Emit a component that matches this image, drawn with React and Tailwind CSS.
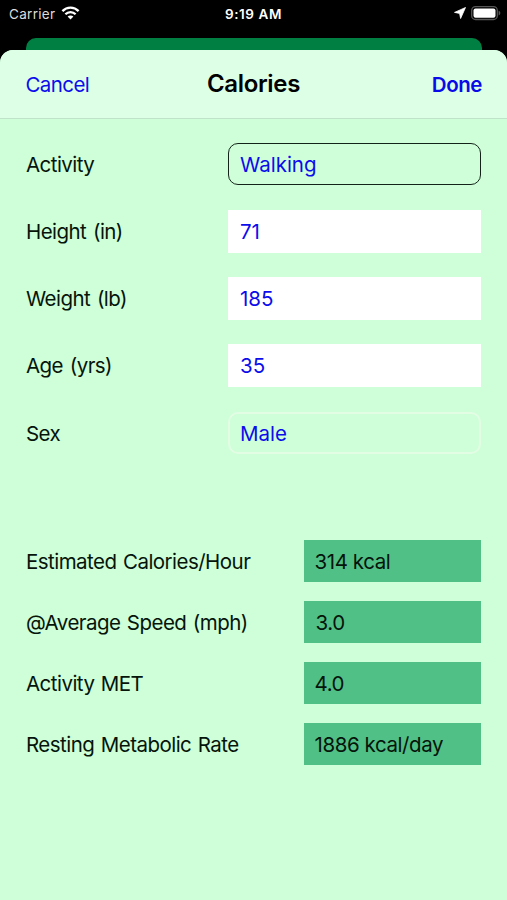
const fields = [
  { label: 'Activity', value: 'Walking', box: 'rounded-[10px] border border-[#14231a] pl-[11px]' },
  { label: 'Height (in)', value: '71', box: 'bg-white pl-3' },
  { label: 'Weight (lb)', value: '185', box: 'bg-white pl-3' },
  { label: 'Age (yrs)', value: '35', box: 'bg-white pl-3' },
  { label: 'Sex', value: 'Male', box: 'rounded-[10px] border-2 border-[#e2fde4] pl-[10px]' },
];

const results = [
  { label: 'Estimated Calories/Hour', value: '314 kcal', pad: 'pl-[11px]' },
  { label: '@Average Speed (mph)', value: '3.0', pad: 'pl-3' },
  { label: 'Activity MET', value: '4.0', pad: 'pl-[11px]' },
  { label: 'Resting Metabolic Rate', value: '1886 kcal/day', pad: 'pl-[11px]' },
];

function StatusBar() {
  return (
    <div className="grid h-[38px] grid-cols-3 pt-1 text-[13.5px] leading-5 text-white">
      <div className="flex items-start gap-[6px] pl-[9px]">
        <span className="tracking-[0.3px] text-[#dcdcdc]">Carrier</span>
        <svg width="19" height="14" viewBox="0 0 18 14" className="mt-[2px]" fill="none" stroke="#fff" strokeWidth="2.3">
          <path d="M0.9 5.1C5.4 0.5 12.6 0.5 17.1 5.1" />
          <path d="M3.9 8.3C6.7 5.4 11.3 5.4 14.1 8.3" />
          <path d="M9 13.4L6.1 10.5C7.7 9 10.3 9 11.9 10.5Z" fill="#fff" stroke="none" />
        </svg>
      </div>
      <div className="text-center font-semibold tracking-[0.6px]">9:19 AM</div>
      <div className="flex items-start justify-end gap-[5px] pr-[6px]">
        <svg width="12" height="12" viewBox="0 0 12 12" className="mt-[3px]">
          <path d="M11.5 0.5L0.5 5.4L5.6 6.4L6.6 11.5Z" fill="#fff" stroke="#fff" strokeWidth="0.8" strokeLinejoin="round" />
        </svg>
        <svg width="30" height="15" viewBox="0 0 30 15" className="mt-[2px]">
          <rect x="0.7" y="0.7" width="25.6" height="12.8" rx="3.8" fill="none" stroke="#575757" strokeWidth="1.3" />
          <rect x="2.5" y="2.5" width="22" height="9.2" rx="2" fill="#fff" />
          <path d="M27.6 4.8C29.9 5.4 29.9 8.8 27.6 9.4Z" fill="#575757" />
        </svg>
      </div>
    </div>
  );
}

export default function App() {
  return (
    <div className="flex h-[900px] w-[507px] flex-col overflow-hidden bg-black font-['Inter',sans-serif] text-[20.5px] leading-6 text-[#06140a]">
      <StatusBar />
      <div className="mx-[25.5px] h-3 shrink-0 rounded-t-[10px] bg-[#007f43]" />

      <div className="flex-1 overflow-hidden rounded-t-[13px] bg-[#ceffd8]">
        <header className="grid h-[69px] grid-cols-3 items-center border-b border-[#bfe3c9] bg-[#dcffe6] px-[25px]">
          <button className="pt-px pl-[0.5px] text-left tracking-[-0.6px] text-[#0c0cec]">Cancel</button>
          <h1 className="pb-px text-center text-[24px] font-semibold tracking-[-0.35px] text-black">Calories</h1>
          <button className="pt-px text-right font-semibold tracking-[-0.45px] text-[#0a0ae8]">Done</button>
        </header>

        <div className="flex flex-col gap-[24.5px] px-[26px] pt-[23.8px]">
          {fields.map((f) => (
            <div key={f.label} className="flex h-[42.7px] items-center justify-between">
              <span className="pt-[1.4px] tracking-[-0.55px] [word-spacing:1.5px]">{f.label}</span>
              <div className={`flex h-full w-[253px] items-center text-[#0c0cec] ${f.box}`}>
                <span className="pt-[1.4px]">{f.value}</span>
              </div>
            </div>
          ))}
        </div>

        <div className="flex flex-col gap-[18.6px] px-[26px] pt-[85.4px]">
          {results.map((r) => (
            <div key={r.label} className="flex h-[42.5px] items-center justify-between">
              <span className="pt-[2px] tracking-[-0.53px] [word-spacing:1.2px]">{r.label}</span>
              <div className={`flex h-full w-[177.5px] items-center bg-[#50c087] tracking-[-0.42px] ${r.pad}`}>
                <span className="pt-[2px]">{r.value}</span>
              </div>
            </div>
          ))}
        </div>
      </div>
    </div>
  );
}
